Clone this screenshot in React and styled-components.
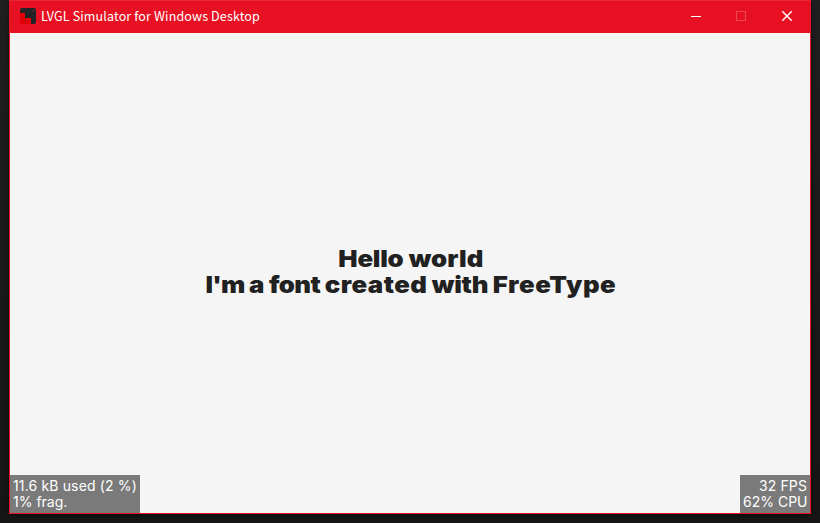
import React from 'react';
import styled, { createGlobalStyle } from 'styled-components';

const GlobalStyle = createGlobalStyle`
  * { box-sizing: border-box; }
  body { margin: 0; background: #1a1a1a; overflow: hidden; }
`;

const Desktop = styled.div`
  height: 523px;
  padding: 0 9px 9px;
  background: linear-gradient(#202020, #1b1b1b 50%, #161616);
`;

const Window = styled.main`
  display: flex;
  flex-direction: column;
  width: 802px;
  height: 514px;
  border: 1px solid #e81123;
  border-top-color: #e62a38;
  background: #f5f5f5;
  box-shadow: 0 2px 8px rgba(0, 0, 0, 0.45);
`;

const TitleBar = styled.header`
  display: flex;
  flex: 0 0 32px;
  align-items: center;
  padding: 0 0 2px 10px;
  background: #e81123;
`;

const AppIcon = styled.svg`
  width: 16px;
  height: 16px;
  margin-right: 5px;
`;

const Title = styled.h1`
  flex: 1;
  margin: 0;
  color: #fff;
  font: 400 12.5px/30px "Noto Sans CJK SC", "Noto Sans", sans-serif;
  letter-spacing: 0.14px;
  white-space: nowrap;
`;

const WindowButton = styled.button`
  display: flex;
  align-items: center;
  justify-content: center;
  width: 45px;
  height: 30px;
  padding: 0;
  border: 0;
  background: none;
  color: ${(p) => (p.disabled ? '#f04552' : '#fff')};

  &:last-child {
    width: 47px;
    padding-left: 1px;
  }
`;

const Client = styled.section`
  display: grid;
  grid-template-columns: 1fr 1fr;
  grid-template-rows: 442px 38px;
  height: 480px;
`;

const Message = styled.div`
  grid-column: 1 / -1;
  padding: 213px 0 0 1.6px;
  color: #212121;
  font: 900 23px/26px Inter, "Liberation Sans", sans-serif;
  transform: scaleX(1.12);
`;

const Line = styled.div`
  display: flex;
  justify-content: center;
  gap: ${(p) => p.$gap}px;
  white-space: nowrap;
`;

const Word = styled.span`
  letter-spacing: ${(p) => p.$track || 0}px;
`;

const Monitor = styled.aside`
  justify-self: ${(p) => (p.$end ? 'end' : 'start')};
  width: ${(p) => (p.$end ? 70 : 130)}px;
  padding: 3px;
  background: #7a7a7a;
  color: #fff;
  font: 400 14px/16px Inter, "Liberation Sans", sans-serif;
  text-align: ${(p) => (p.$end ? 'right' : 'left')};
  white-space: nowrap;
`;

const Reading = styled.div`
  letter-spacing: ${(p) => p.$track || 0}px;
`;

export default function App() {
  return (
    <Desktop>
      <GlobalStyle />
      <Window>
        <TitleBar>
          <AppIcon viewBox="0 0 16 16" shapeRendering="crispEdges">
            <path d="M1 0h14v1h1v14h-1v1H0V1h1z" fill="#242428" />
            <path d="M0 5h5v5h6v6H0z" fill="#e60008" />
            <path d="M5.5 10v6M0 10.5h5" stroke="#c00a14" strokeWidth="1" />
            <path d="M13 2h1v1h-1z" fill="#ff3340" />
          </AppIcon>
          <Title>LVGL Simulator for Windows Desktop</Title>
          <WindowButton aria-label="Minimize">
            <svg width="10" height="10" shapeRendering="crispEdges">
              <path d="M0 5.5h10" stroke="currentColor" />
            </svg>
          </WindowButton>
          <WindowButton aria-label="Maximize" disabled>
            <svg width="10" height="10" shapeRendering="crispEdges">
              <path d="M.5.5h9v9h-9z" fill="none" stroke="currentColor" />
            </svg>
          </WindowButton>
          <WindowButton aria-label="Close">
            <svg width="10" height="10">
              <path d="M.3.3l9.4 9.4M9.7.3L.3 9.7" stroke="currentColor" strokeWidth="1.4" />
            </svg>
          </WindowButton>
        </TitleBar>
        <Client>
          <Message>
            <Line $gap={4.6}>
              <Word $track={-0.2}>Hello</Word>
              <Word $track={0.1}>world</Word>
            </Line>
            <Line $gap={4}>
              <Word $track={-0.7}>I'm</Word>
              <Word>a</Word>
              <Word $track={-0.5}>font</Word>
              <Word $track={0.4}>created</Word>
              <Word $track={-0.2}>with</Word>
              <Word $track={0.5}>FreeType</Word>
            </Line>
          </Message>
          <Monitor>
            <Reading $track={0.15}>11.6 kB used (2 %)</Reading>
            <Reading>1% frag.</Reading>
          </Monitor>
          <Monitor $end>
            <Reading $track={0.1}>32 FPS</Reading>
            <Reading>62% CPU</Reading>
          </Monitor>
        </Client>
      </Window>
    </Desktop>
  );
}
